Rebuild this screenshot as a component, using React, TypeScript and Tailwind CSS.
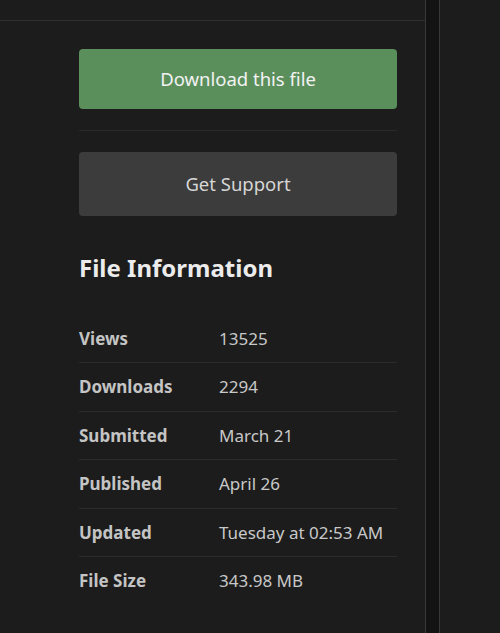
import React from "react";

const rows: [string, string][] = [
  ["Views", "13525"],
  ["Downloads", "2294"],
  ["Submitted", "March 21"],
  ["Published", "April 26"],
  ["Updated", "Tuesday at 02:53 AM"],
  ["File Size", "343.98 MB"],
];

export default function App() {
  return (
    <div
      className="flex h-[633px] w-[500px] overflow-hidden bg-[#1c1c1c]"
      style={{ fontFamily: '"Noto Sans", "Open Sans", sans-serif' }}
    >
      <div className="flex w-[426px] shrink-0 flex-col border-r border-[#383838]">
        <div className="h-[21px] border-b border-[#2f2f2f]" />
        <div className="flex flex-col pl-[79px] pr-[28px] pt-[28px]">
          <button className="flex h-[60px] items-center justify-center rounded-[4px] bg-[#5a8f5c] text-[18.5px] text-[#f2f2f2]">
            Download this file
          </button>
          <div className="mt-[21px] h-px bg-[#2a2a2a]" />
          <button className="mt-[21px] flex h-[64px] items-center justify-center rounded-[4px] bg-[#3c3c3c] text-[18.5px] text-[#d6d6d6]">
            Get Support
          </button>
          <h2 className="mt-[36px] text-[24px] font-bold leading-[32px] text-[#ececec]">
            File Information
          </h2>
          <div className="mt-[31px] flex flex-col">
            {rows.map(([k, v], i) => (
              <div
                key={k}
                className={`flex h-[48.4px] items-center ${
                  i < rows.length - 1 ? "border-b border-[#2b2b2b]" : ""
                }`}
              >
                <div className="w-[140px] text-[17px] font-bold text-[#c4c4c4]">{k}</div>
                <div className="text-[17px] text-[#c8c8c8]">{v}</div>
              </div>
            ))}
          </div>
        </div>
      </div>
      <div className="w-[14px] shrink-0 border-r border-[#383838] bg-[#131313]" />
      <div className="flex-1 bg-[#1c1c1c]" />
    </div>
  );
}
